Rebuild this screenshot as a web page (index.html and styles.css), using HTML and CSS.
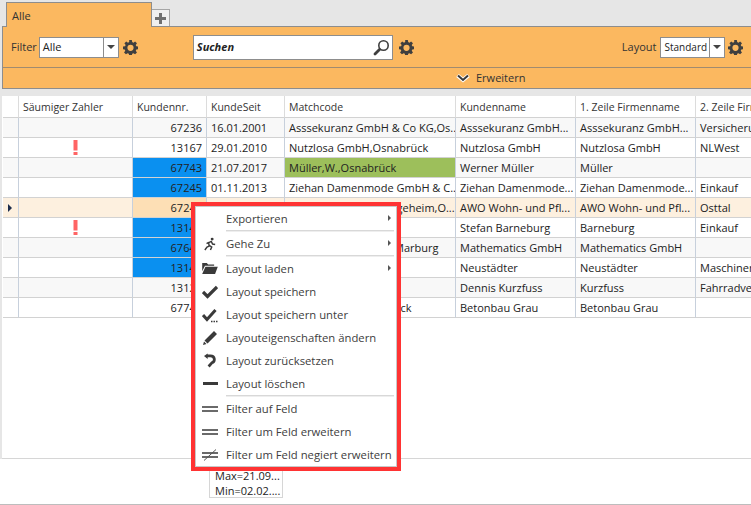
FILE: index.html
```html
<!DOCTYPE html>
<html lang="de">
<head>
<meta charset="utf-8">
<title>Kunden</title>
<link rel="stylesheet" href="styles.css">
</head>
<body>
<svg class="defs" width="0" height="0" aria-hidden="true">
  <symbol id="gear" viewBox="0 0 16 16"><path fill="#3f3f3f" fill-rule="evenodd" d="M6.600 0h2.800l.4 2.200 1.300.6L12.900 1.500l2 2-1.300 1.800.6 1.300 2.200.4v2.800l-2.200.4-.6 1.300 1.300 1.800-2 2-1.800-1.300-1.300.6-.4 2.200H6.600l-.4-2.200-1.300-.6-1.800 1.300-2-2 1.300-1.800-.6-1.300L0 9.800V7l2.200-.4.6-1.300L1.500 3.500l2-2 1.800 1.300 1.300-.6zM8 5a3.300 3.300 0 1 0 0 6.600A3.300 3.300 0 0 0 8 5z"/></symbol>
  <symbol id="check" viewBox="0 0 16 16"><path fill="none" stroke="#3a3a3a" stroke-width="3.200" d="M1 8l4.500 4.500L15 3"/></symbol>
  <symbol id="bang" viewBox="0 0 5 15"><path fill="#ff6464" d="M.5 0h4v10.500h-4zM.5 12h4v3h-4z"/></symbol>
</svg>

<nav class="tabs">
  <div class="tab">Alle</div>
  <div class="tab-add">
    <svg width="11" height="11" viewBox="0 0 11 11"><path fill="#6f6f6f" d="M4 0h3v4h4v3H7v4H4V7H0V4h4z"/></svg>
  </div>
</nav>

<section class="panel">
  <div class="toolbar">
    <span class="label">Filter</span>
    <div class="combo combo-filter"><span class="combo-text">Alle</span><span class="combo-btn"><i class="arrow"></i></span></div>
    <svg class="gear gear-filter"><use href="#gear"/></svg>
    <div class="search">
      <span class="search-text">Suchen</span>
      <svg class="lens" width="17" height="17" viewBox="0 0 17 17"><circle cx="10.500" cy="6.500" r="4.700" fill="#fff" stroke="#3f3f3f" stroke-width="1.600"/><path stroke="#3f3f3f" stroke-width="2.800" stroke-linecap="round" d="M6.500 10.500L2 15"/></svg>
    </div>
    <svg class="gear gear-search"><use href="#gear"/></svg>
    <span class="label label-layout">Layout</span>
    <div class="combo combo-layout"><span class="combo-text">Standard</span><span class="combo-btn"><i class="arrow"></i></span></div>
    <svg class="gear gear-layout"><use href="#gear"/></svg>
  </div>
  <div class="expander">
    <svg width="14" height="9" viewBox="0 0 14 9"><path fill="none" stroke="#fff" stroke-width="4" d="M1.500 1.500L7 6l5.500-4.500"/><path fill="none" stroke="#3a3a3a" stroke-width="2" d="M2 1.500L7 6l5-4.500"/></svg>
    <span>Erweitern</span>
  </div>
</section>

<main class="grid-wrap">
  <table class="grid">
    <thead>
      <tr>
        <th class="c0"></th><th class="c1">Säumiger Zahler</th><th class="c2">Kundennr.</th><th class="c3">KundeSeit</th><th class="c4">Matchcode</th><th class="c5">Kundenname</th><th class="c6">1. Zeile Firmenname</th><th class="c7">2. Zeile Firmenname</th>
      </tr>
    </thead>
    <tbody>
      <tr class="alt"><td></td><td></td><td class="num">67236</td><td>16.01.2001</td><td>Asssekuranz GmbH &amp; Co KG,Os...</td><td>Asssekuranz GmbH...</td><td>Asssekuranz GmbH...</td><td>Versicherung</td></tr>
      <tr><td></td><td class="warn"><svg class="bang" role="img" aria-label="!"><use href="#bang"/></svg></td><td class="num">13167</td><td>29.01.2010</td><td>Nutzlosa GmbH,Osnabrück</td><td>Nutzlosa GmbH</td><td>Nutzlosa GmbH</td><td>NLWest</td></tr>
      <tr class="alt"><td></td><td></td><td class="num blue">67743</td><td>21.07.2017</td><td class="green">Müller,W.,Osnabrück</td><td>Werner Müller</td><td>Müller</td><td></td></tr>
      <tr><td></td><td></td><td class="num blue">67245</td><td>01.11.2013</td><td>Ziehan Damenmode GmbH &amp; C...</td><td>Ziehan Damenmode...</td><td>Ziehan Damenmode...</td><td>Einkauf</td></tr>
      <tr class="sel"><td class="pointer"><i class="caret"></i></td><td></td><td class="num sel-cell">67241</td><td>12.03.2012</td><td>AWO Wohn- und Pflegeheim,O...</td><td>AWO Wohn- und Pfl...</td><td>AWO Wohn- und Pfl...</td><td>Osttal</td></tr>
      <tr><td></td><td class="warn"><svg class="bang" role="img" aria-label="!"><use href="#bang"/></svg></td><td class="num blue">13142</td><td>05.06.2011</td><td>Barneburg,S.,Melle</td><td>Stefan Barneburg</td><td>Barneburg</td><td>Einkauf</td></tr>
      <tr class="alt"><td></td><td></td><td class="num blue">67642</td><td>14.09.2015</td><td>Mathematics GmbH,Marburg</td><td>Mathematics GmbH</td><td>Mathematics GmbH</td><td></td></tr>
      <tr><td></td><td></td><td class="num blue">13143</td><td>23.02.2011</td><td>Neustädter,Melle</td><td>Neustädter</td><td>Neustädter</td><td>Maschinenbau</td></tr>
      <tr class="alt"><td></td><td></td><td class="num">13125</td><td>02.02.2009</td><td>Kurzfuss,D.,Melle</td><td>Dennis Kurzfuss</td><td>Kurzfuss</td><td>Fahrradverleih</td></tr>
      <tr><td></td><td></td><td class="num">67744</td><td>21.09.2017</td><td>Betonbau G.,Osnabrück</td><td>Betonbau Grau</td><td>Betonbau Grau</td><td></td></tr>
    </tbody>
  </table>
</main>

<footer class="summary-bar">
  <div class="summary">Max=21.09...<br>Min=02.02....</div>
</footer>

<div class="menu">
  <ul class="menu-list">
    <li class="item sub"><span class="ico"></span>Exportieren</li>
    <li class="sep"></li>
    <li class="item sub"><span class="ico"><svg width="12" height="14" viewBox="0 0 14 15"><circle cx="9.500" cy="1.800" r="1.700" fill="#3a3a3a"/><path fill="none" stroke="#3a3a3a" stroke-width="1.700" d="M1 14.500l2.500-3.500 2.500-1 -.5-4 3-1.500 1.500 3 3 .5M5.500 5.500L3 7M6.500 9.500l2.500 1.500-1.500 3.500"/></svg></span>Gehe Zu</li>
    <li class="sep"></li>
    <li class="item sub"><span class="ico"><svg width="16" height="11" viewBox="0 0 17 12"><path fill="#3a3a3a" d="M0 0h5l1.500 1.500h6.500V3H3L0 9z"/><path fill="#3a3a3a" d="M3.500 4H17l-3 8H0z"/></svg></span>Layout laden</li>
    <li class="item"><span class="ico"><svg width="16" height="16"><use href="#check"/></svg></span>Layout speichern</li>
    <li class="item"><span class="ico"><svg width="16" height="16" viewBox="0 0 16 16"><path fill="none" stroke="#3a3a3a" stroke-width="3" d="M1 8l4 4.500L13.500 3"/><path stroke="#3a3a3a" stroke-width="1.500" stroke-dasharray="1.500 1" d="M9 14.500h7"/></svg></span>Layout speichern unter</li>
    <li class="item"><span class="ico"><svg width="16" height="16" viewBox="0 0 16 16"><path fill="#3a3a3a" d="M12 1l3 3-9.500 9.500-3-3zM2 11.500l2.500 2.500-3.500 1z"/></svg></span>Layouteigenschaften ändern</li>
    <li class="item"><span class="ico"><svg width="12" height="15" viewBox="0 0 13 15"><path fill="none" stroke="#3a3a3a" stroke-width="3" d="M3 2.500h4c5 0 5.500 6 1.500 7.500L5 14"/><path fill="#3a3a3a" d="M0 2.500L4 0v6z"/></svg></span>Layout zurücksetzen</li>
    <li class="item"><span class="ico"><i class="bar"></i></span>Layout löschen</li>
    <li class="sep"></li>
    <li class="item"><span class="ico"><i class="eq"></i></span>Filter auf Feld</li>
    <li class="item"><span class="ico"><i class="eq"></i></span>Filter um Feld erweitern</li>
    <li class="item"><span class="ico"><svg width="16" height="12" viewBox="0 0 16 12"><path stroke="#6a6a6a" stroke-width="2" d="M0 4h16M0 8h16"/><path stroke="#555" stroke-width="1" d="M2 11.500L14 .5"/></svg></span>Filter um Feld negiert erweitern</li>
  </ul>
</div>
</body>
</html>
```
FILE: styles.css
```css
* { box-sizing: border-box; }
html, body { margin: 0; height: 100%; }
body {
  position: relative;
  display: flex;
  flex-direction: column;
  height: 505px;
  overflow: hidden;
  background: #e6e6e6;
  color: #333;
  font: 11px/14px "Open Sans", "Noto Sans", sans-serif;
}
.defs { position: absolute; }

.tabs { display: flex; align-items: flex-end; height: 27px; padding: 2px 0 0 6px; margin-bottom: -1px; position: relative; z-index: 1; }
.tab { width: 146px; height: 25px; padding: 6px 0 0 5px; background: #fbb860; border: 1px solid #8d8d8d; border-bottom: 0; }
.tab-add { width: 18px; height: 17px; margin-bottom: 1px; display: flex; align-items: center; justify-content: center; background: #efefef; border: 1px solid #a5a5a5; border-left: 0; border-bottom: 0; }

.panel { height: 63px; margin-left: 2px; background: #fbb860; border: 1px solid #8d8d8d; border-right: 0; }
.toolbar { display: flex; align-items: center; height: 41px; padding: 0 0 0 8px; border-bottom: 1px solid #a08b70; }
.label { margin-right: 2px; }
.label-layout { margin-left: 208px; margin-right: 4px; }
.combo { display: flex; height: 21px; background: #fff; border: 1px solid #8d8d8d; color: #222; }
.combo-text { flex: 1; padding: 2px 0 0 3px; white-space: nowrap; overflow: hidden; }
.combo-btn { width: 15px; flex: none; display: flex; align-items: center; justify-content: center; border-left: 1px solid #8d8d8d; }
.arrow { border: 4px solid transparent; border-top: 4px solid #444; border-bottom: 0; }
.combo-filter { width: 80px; }
.combo-layout { width: 65px; font-size: 10px; }
.gear { width: 15px; height: 15px; }
.gear-filter { margin: 0 55px 0 4px; }
.gear-search { margin-left: 6px; }
.gear-layout { margin-left: 3px; }
.search { display: flex; align-items: center; justify-content: space-between; width: 200px; height: 25px; padding: 0 2px 0 3px; background: #fff; border: 1px solid #8d8d8d; }
.search-text { font-weight: 700; font-style: italic; color: #222; }
.expander { display: flex; align-items: center; gap: 6px; height: 20px; padding-left: 453px; }

.grid-wrap { height: 363px; margin: 7px 0 0 2px; padding-left: 1px; background: #fff; overflow: hidden; border-bottom: 1px solid #d6d6d6; }
.grid { table-layout: fixed; width: 813px; border-collapse: separate; border-spacing: 0; color: #222; }
.c0 { width: 16px; } .c1 { width: 114px; } .c2 { width: 74px; } .c3 { width: 78px; }
.c4 { width: 171px; } .c5 { width: 120px; } .c6 { width: 120px; } .c7 { width: 120px; }
th, td { height: 20px; padding: 0 4px; border-right: 1px solid #c7d0dc; border-bottom: 1px solid #d2d2d2; white-space: nowrap; overflow: hidden; font-weight: 400; text-align: left; }
th { height: 22px; color: #333; border-right-color: #dcdcdc; font-size: 10.500px; }
.alt td { background: #f8f8f8; }
.num { text-align: right; }
td.blue { background: #0a90f0; }
td.green { background: #9dbf5b; }
.sel td { background: #fdf0df; }
.sel td.sel-cell { background: #fddfb5; }
td.warn { text-align: center; padding: 0; }
.bang { display: block; width: 5px; height: 15px; margin: 0 auto; }
.caret { display: block; margin-left: 1px; border-left: 4px solid #1c2c4c; border-top: 4px solid transparent; border-bottom: 4px solid transparent; width: 0; }
td.pointer { padding: 0 0 0 4px; }

.summary-bar { flex: 1; background: #fff; border-bottom: 1px solid #bdbdbd; padding: 3px 0 0 209px; }
.summary { width: 74px; height: 36px; padding: 5px 0 0 5px; border: 1px solid #d6d6d6; line-height: 15px; color: #222; }

.menu { position: absolute; left: 191px; top: 202px; width: 210px; height: 269px; background: #fff; border: 4px solid #ff3333; }
.menu-list { list-style: none; margin: 0; padding: 0; height: 100%; border: 1px solid #c8c8c8; font-size: 11.300px; color: #404040; }
.item { position: relative; display: flex; align-items: center; height: 23px; }
.ico { width: 30px; padding-right: 2px; display: flex; justify-content: center; align-items: center; flex: none; }
.sep { height: 2px; margin-left: 30px; margin-right: 2px; background: #d8d8d8; border-bottom: 1px solid #eee; }
.sub::after { content: ""; position: absolute; right: 5px; top: 8px; border-left: 3px solid #555; border-top: 3px solid transparent; border-bottom: 3px solid transparent; }
.bar { display: block; width: 15px; height: 2.500px; background: #3a3a3a; }
.eq { display: block; width: 16px; height: 6px; border-top: 2px solid #6a6a6a; border-bottom: 2px solid #6a6a6a; }
```
